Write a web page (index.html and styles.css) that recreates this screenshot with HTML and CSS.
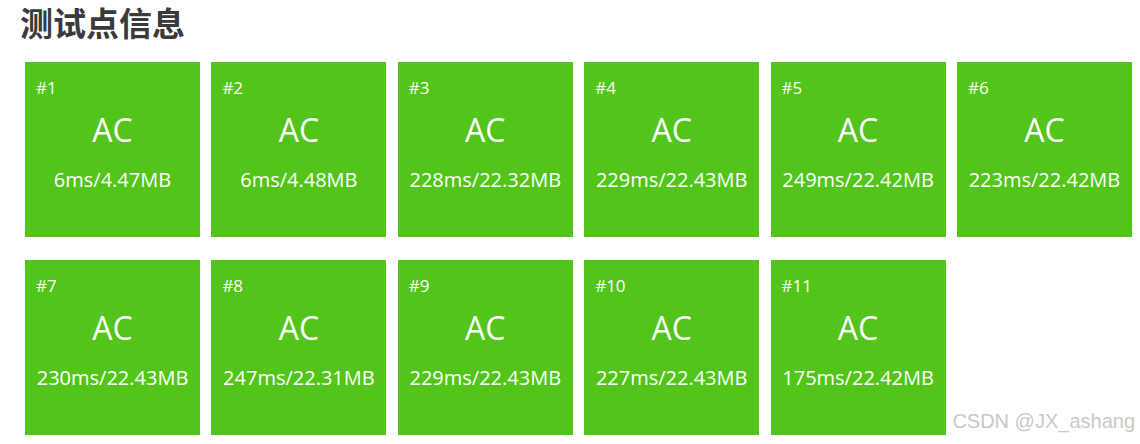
FILE: index.html
```html
<!DOCTYPE html>
<html>

<head>
	<meta charset="utf-8" />
	<link rel="stylesheet" href="styles.css">
</head>

<body>
	<div class="case-panel">
		<h2 class="case-title">测试点信息</h2>

		<div class="case-grid">
			<div class="case-box">
				<div class="case-id">#1</div>
				<div class="case-status">AC</div>
				<div class="case-info">6ms/4.47MB</div>
			</div>
			<div class="case-box">
				<div class="case-id">#2</div>
				<div class="case-status">AC</div>
				<div class="case-info">6ms/4.48MB</div>
			</div>
			<div class="case-box">
				<div class="case-id">#3</div>
				<div class="case-status">AC</div>
				<div class="case-info">228ms/22.32MB</div>
			</div>
			<div class="case-box">
				<div class="case-id">#4</div>
				<div class="case-status">AC</div>
				<div class="case-info">229ms/22.43MB</div>
			</div>
			<div class="case-box">
				<div class="case-id">#5</div>
				<div class="case-status">AC</div>
				<div class="case-info">249ms/22.42MB</div>
			</div>
			<div class="case-box">
				<div class="case-id">#6</div>
				<div class="case-status">AC</div>
				<div class="case-info">223ms/22.42MB</div>
			</div>
			<div class="case-box">
				<div class="case-id">#7</div>
				<div class="case-status">AC</div>
				<div class="case-info">230ms/22.43MB</div>
			</div>
			<div class="case-box">
				<div class="case-id">#8</div>
				<div class="case-status">AC</div>
				<div class="case-info">247ms/22.31MB</div>
			</div>
			<div class="case-box">
				<div class="case-id">#9</div>
				<div class="case-status">AC</div>
				<div class="case-info">229ms/22.43MB</div>
			</div>
			<div class="case-box">
				<div class="case-id">#10</div>
				<div class="case-status">AC</div>
				<div class="case-info">227ms/22.43MB</div>
			</div>
			<div class="case-box">
				<div class="case-id">#11</div>
				<div class="case-status">AC</div>
				<div class="case-info">175ms/22.42MB</div>
			</div>
		</div>
	</div>

	<div class="watermark">CSDN @JX_ashang</div>
</body>

</html>
```

FILE: styles.css
```css
body {
	margin: 0;
	background-color: #fff;
	font-family: "Open Sans", "Noto Sans CJK SC", sans-serif;
	color: #333;
}

.case-panel {
	padding: 0 0 0 20px;
}

.case-title {
	margin: 0;
	padding-top: 2px;
	font-family: "Noto Sans CJK SC", sans-serif;
	font-size: 33px;
	font-weight: 700;
	line-height: 40px;
	color: #3a3a3a;
}

.case-grid {
	display: grid;
	grid-template-columns: repeat(6, 175px);
	column-gap: 11.4px;
	row-gap: 23px;
	margin-top: 20px;
	margin-left: 5px;
}

.case-box {
	box-sizing: border-box;
	height: 175px;
	padding: 15.5px 0 0 0;
	background-color: #52c41a;
	color: #fff;
	text-align: center;
}

.case-id {
	padding-left: 11px;
	text-align: left;
	font-size: 17px;
	line-height: 20px;
}

.case-status {
	margin-top: 12px;
	font-size: 32px;
	line-height: 40px;
}

.case-info {
	margin-top: 17.6px;
	font-size: 20px;
	line-height: 26px;
	white-space: nowrap;
}

.watermark {
	position: absolute;
	right: 5px;
	top: 409px;
	font-family: "Liberation Sans", sans-serif;
	font-size: 20px;
	line-height: 24px;
	color: #c9c9c9;
}
```
